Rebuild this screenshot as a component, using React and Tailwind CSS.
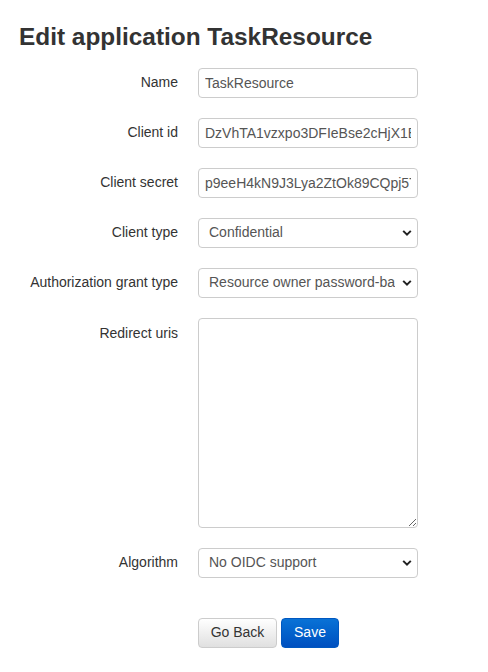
import React, { useState } from "react";

const Chevron = () => (
  <svg
    className="pointer-events-none absolute right-[6px] top-1/2 -translate-y-1/2"
    width="10"
    height="7"
    viewBox="0 0 10 7"
  >
    <path d="M1.2 1.4 L5 5.2 L8.8 1.4" fill="none" stroke="#222" strokeWidth="2" />
  </svg>
);

const inputCls =
  "w-[220px] h-[30px] border border-[#ccc] rounded-[4px] bg-white px-[6px] text-[14px] text-[#555] outline-none";

const Field = ({ label, children, top }) => (
  <div className={`flex ${top ? "items-start" : "items-center"}`}>
    <label
      className={`w-[159px] text-right text-[14px] text-[#333] mr-[20px] ${
        top ? "pt-[5px]" : ""
      }`}
    >
      {label}
    </label>
    {children}
  </div>
);

const SelectField = ({ value, onChange, options }) => (
  <div className="relative w-[220px]">
    <select
      value={value}
      onChange={(e) => onChange(e.target.value)}
      className={`${inputCls} appearance-none pl-[10px] pr-[22px] overflow-hidden whitespace-nowrap`}
    >
      {options.map((o) => (
        <option key={o} value={o}>
          {o}
        </option>
      ))}
    </select>
    <Chevron />
  </div>
);

export default function App() {
  const [name, setName] = useState("TaskResource");
  const [clientId, setClientId] = useState("DzVhTA1vzxpo3DFIeBse2cHjX1BqWnR8");
  const [secret, setSecret] = useState("p9eeH4kN9J3Lya2ZtOk89CQpj5TzR0aM");
  const [clientType, setClientType] = useState("Confidential");
  const [grant, setGrant] = useState("Resource owner password-based");
  const [uris, setUris] = useState("");
  const [algo, setAlgo] = useState("No OIDC support");

  return (
    <div
      className="min-h-screen bg-white pl-[19px] pt-[24px]"
      style={{ fontFamily: '"Liberation Sans", Arial, sans-serif' }}
    >
      <h2 className="text-[24.4px] font-bold text-[#333] leading-[1.1] mb-[17px]">
        Edit application TaskResource
      </h2>

      <div className="flex flex-col gap-[20px]">
        <Field label="Name">
          <input className={inputCls} value={name} onChange={(e) => setName(e.target.value)} />
        </Field>
        <Field label="Client id">
          <input className={inputCls} value={clientId} onChange={(e) => setClientId(e.target.value)} />
        </Field>
        <Field label="Client secret">
          <input className={inputCls} value={secret} onChange={(e) => setSecret(e.target.value)} />
        </Field>
        <Field label="Client type">
          <SelectField
            value={clientType}
            onChange={setClientType}
            options={["Confidential", "Public"]}
          />
        </Field>
        <Field label="Authorization grant type">
          <SelectField
            value={grant}
            onChange={setGrant}
            options={[
              "Authorization code",
              "Implicit",
              "Resource owner password-based",
              "Client credentials",
            ]}
          />
        </Field>
        <Field label="Redirect uris" top>
          <textarea
            className="w-[220px] h-[210px] border border-[#ccc] rounded-[4px] bg-white px-[6px] py-[6px] text-[14px] text-[#555] outline-none block"
            value={uris}
            onChange={(e) => setUris(e.target.value)}
          />
        </Field>
        <Field label="Algorithm">
          <SelectField
            value={algo}
            onChange={setAlgo}
            options={["No OIDC support", "RSA with SHA-2 256", "HMAC with SHA-2 256"]}
          />
        </Field>
      </div>

      <div className="flex gap-[4px] mt-[40px] ml-[179px]">
        <button className="h-[30px] w-[79px] rounded-[4px] border border-[#ccc] bg-gradient-to-b from-white to-[#e0e0e0] text-[14px] text-[#333]">
          Go Back
        </button>
        <button className="h-[30px] w-[58px] rounded-[4px] border border-[#0058c0] bg-gradient-to-b from-[#0a72d6] to-[#0050c0] text-[14px] text-white">
          Save
        </button>
      </div>
    </div>
  );
}
